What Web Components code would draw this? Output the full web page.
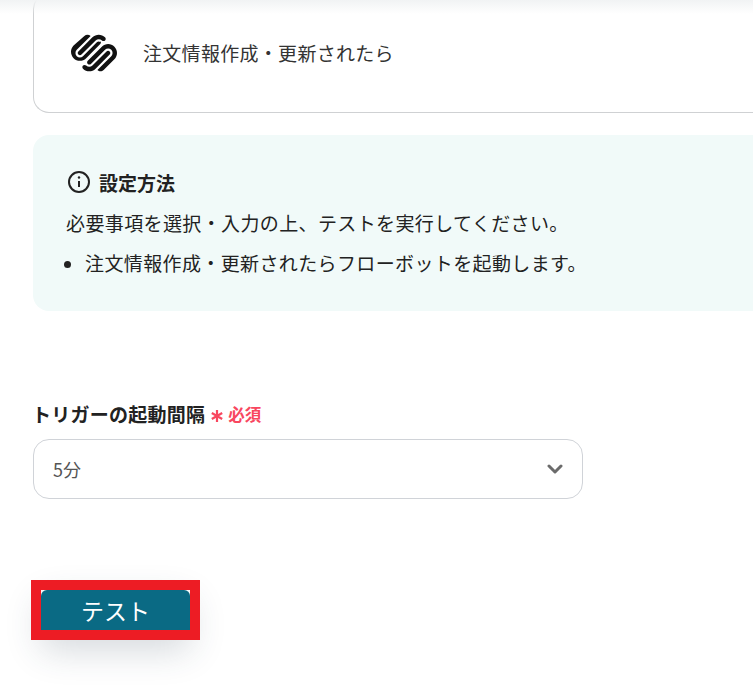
<!DOCTYPE html>
<html lang="ja">
<head>
<meta charset="utf-8">
<title>トリガー設定</title>
<style>
  html, body{ margin: 0; padding: 0; background: #fff; overflow: hidden; height: 695px; }
  body{ font-family: "Noto Sans CJK JP", "Noto Sans", sans-serif; color: #222; }
  #page{ display: flex; flex-direction: column; padding-left: 33px; margin-top: -7px; }
  .top-fade{ position: absolute; left: 0; top: 0; right: 0; height: 14px; background: linear-gradient(#f1f3f4, rgba(255,255,255,0)); }
</style>
</head>
<body>
<div id="page">
  <app-card label="注文情報作成・更新されたら"></app-card>
  <info-box heading="設定方法">
    <span slot="lead">必要事項を選択・入力の上、テストを実行してください。</span>
    <li>注文情報作成・更新されたらフローボットを起動します。</li>
  </info-box>
  <select-field label="トリガーの起動間隔" value="5分"></select-field>
  <test-button>テスト</test-button>
</div>
<div class="top-fade"></div>

<script>
  class AppCard extends HTMLElement {
    connectedCallback(){
      const shadow = this.attachShadow({mode: "open"});
      shadow.innerHTML = `
        <style>
          :host{ display: block; }
          /* the card runs on past the right edge of the window in the reference, so no right border */
          .card{
            display: flex; align-items: center; gap: 26px;
            height: 120px; box-sizing: border-box; padding-left: 37px;
            border: 1px solid #cfd1d3; border-right: 0; border-radius: 16px 0 0 16px; background: #fff;
          }
          svg{ width: 46px; height: 46px; display: block; }
          span{ font-size: 19px; letter-spacing: .3px; color: #333; font-weight: 400; position: relative; top: -1px; }
        </style>
        <div class="card">
          <svg viewBox="0 0 24 24" fill="#111">
            <path d="M22.655 8.719c-1.802-1.801-4.726-1.801-6.564 0l-7.351 7.35c-.45.45-.45 1.2 0 1.65.45.449 1.2.449 1.65 0l7.351-7.351c.899-.899 2.362-.899 3.264 0 .9.9.9 2.364 0 3.264l-7.239 7.239c.9.899 2.362.899 3.263 0l5.589-5.589c1.836-1.838 1.836-4.763.037-6.563zm-2.475 2.437c-.451-.45-1.201-.45-1.65 0l-7.354 7.389c-.9.899-2.361.899-3.262 0-.45-.45-1.2-.45-1.65 0s-.45 1.2 0 1.649c1.801 1.801 4.726 1.801 6.564 0l7.351-7.35c.449-.487.449-1.239.001-1.688zm-2.439-7.35c-1.801-1.801-4.726-1.801-6.564 0l-7.351 7.351c-.45.449-.45 1.199 0 1.649s1.2.45 1.65 0l7.395-7.351c.9-.899 2.371-.899 3.27 0 .451.45 1.201.45 1.65 0 .449-.449.449-1.199-.05-1.649zm-2.475 2.474c-.45-.45-1.2-.45-1.65 0l-7.351 7.351c-.899.899-2.363.899-3.265 0-.9-.9-.9-2.363 0-3.264l7.239-7.239c-.9-.9-2.362-.9-3.263 0L1.35 8.144c-1.8 1.8-1.8 4.725 0 6.563 1.801 1.801 4.725 1.801 6.564 0l7.35-7.351C15.714 6.881 15.714 6.131 15.266 5.68z"/>
          </svg>
          <span>${this.getAttribute("label")}</span>
        </div>`;
    }
  }

  class InfoBox extends HTMLElement {
    connectedCallback(){
      const shadow = this.attachShadow({mode: "open"});
      shadow.innerHTML = `
        <style>
          :host{ display: block; margin-top: 22px; }
          .box{
            height: 176px; box-sizing: border-box; padding: 33px 33px 0;
            background: #f1faf9; border-radius: 16px 0 0 16px; color: #222;
            font-size: 19px; letter-spacing: .38px; font-weight: 400;
          }
          .head{ display: flex; align-items: center; gap: 8px; height: 28px; padding-left: 1px; }
          .head svg{ width: 24px; height: 24px; display: block; }
          .head b{ font-size: 19px; font-weight: 700; letter-spacing: 0; }
          .lead{ margin-top: 12px; line-height: 30px; height: 30px; }
          ::slotted(li){ margin-left: 19px; line-height: 30px; margin-top: 10px; padding-left: 0; }
        </style>
        <div class="box">
          <div class="head">
            <svg viewBox="0 0 24 24" fill="none" stroke="#222" stroke-width="2">
              <circle cx="12" cy="12" r="10"/>
              <path d="M12 11v6"/>
              <circle cx="12" cy="7.500" r="1.200" fill="#222" stroke="none"/>
            </svg>
            <b>${this.getAttribute("heading")}</b>
          </div>
          <div class="lead"><slot name="lead"></slot></div>
          <slot></slot>
        </div>`;
    }
  }

  class SelectField extends HTMLElement {
    connectedCallback(){
      const shadow = this.attachShadow({mode: "open"});
      shadow.innerHTML = `
        <style>
          :host{ display: block; margin-top: 89px; width: 550px; }
          .label{ display: flex; align-items: center; height: 28px; line-height: 28px; }
          .label b{ font-size: 19px; font-weight: 700; letter-spacing: .25px; color: #222; margin-left: -1px; }
          .ast{ width: 14px; height: 14px; margin: 4px 0 0 5px; display: block; }
          .req{ color: #f8475f; font-size: 16.500px; font-weight: 700; margin-left: 4px; }
          .select{
            display: flex; align-items: center; justify-content: space-between;
            height: 60px; box-sizing: border-box; margin-top: 11px; padding: 0 19px 0 19px;
            border: 1px solid #d0d3d8; border-radius: 16px; background: #fff;
            font-size: 18px; color: #555; font-weight: 400;
          }
          .select svg{ width: 16px; height: 10px; display: block; }
        </style>
        <div class="label">
          <b>${this.getAttribute("label")}</b>
          <svg class="ast" viewBox="0 0 14 14" stroke="#f8475f" stroke-width="2.200" fill="none"><path d="M7 1v12M1.800 4l10.400 6M12.200 4L1.800 10"/></svg>
          <span class="req">必須</span>
        </div>
        <div class="select">
          <span>${this.getAttribute("value")}</span>
          <svg viewBox="0 0 16 10" fill="none" stroke="#6b6b6b" stroke-width="3" stroke-linecap="round" stroke-linejoin="round"><path d="M2 2l6 6 6-6"/></svg>
        </div>`;
    }
  }

  class TestButton extends HTMLElement {
    connectedCallback(){
      const shadow = this.attachShadow({mode: "open"});
      shadow.innerHTML = `
        <style>
          :host{ display: block; position: relative; width: 149px; margin: 91px 0 0 8px; }
          button{
            display: block; width: 149px; height: 50px; padding: 0 0 11px; border: 0; border-radius: 6px;
            background: #0a6a84; color: #fff; font: 400 23px "Noto Sans CJK JP", sans-serif;
            box-shadow: 0 10px 36px rgba(40,60,80,.2);
          }
          /* red frame drawn over the button */
          .frame{ position: absolute; left: -10px; top: -10px; width: 169px; height: 60px; box-sizing: border-box; border: 10px solid #ed1c24; }
        </style>
        <button><slot></slot></button>
        <div class="frame"></div>`;
    }
  }

  window.customElements.define("app-card", AppCard);
  window.customElements.define("info-box", InfoBox);
  window.customElements.define("select-field", SelectField);
  window.customElements.define("test-button", TestButton);
</script>
</body>
</html>
